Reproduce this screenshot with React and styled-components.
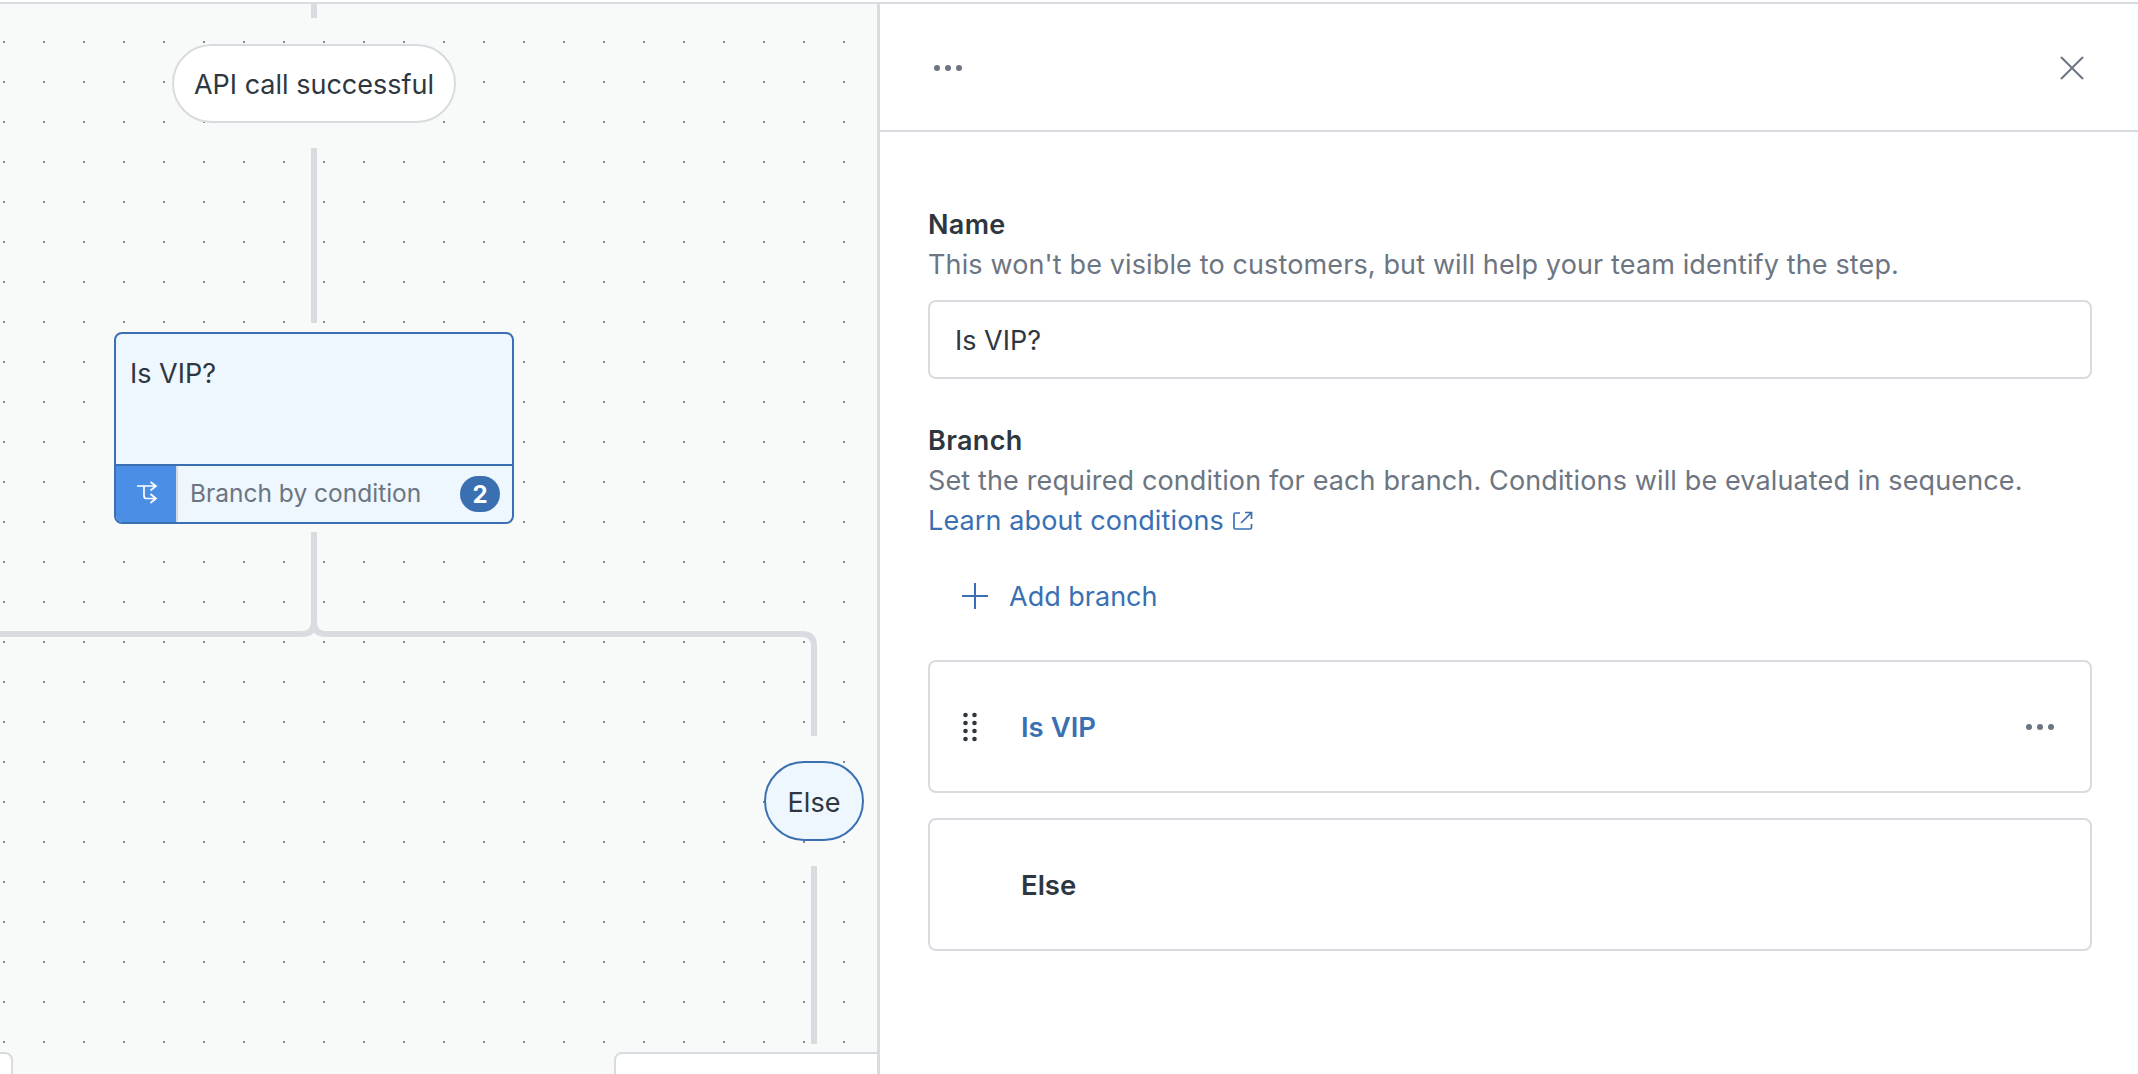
import React from 'react';
import styled, { createGlobalStyle } from 'styled-components';

const LINE = '#d8dbdf';
const BLUE = '#3a70b2';
const INK = '#2e3740';
const GREY = '#6c7581';

const Global = createGlobalStyle`
    html, body {
        margin: 0;
        padding: 0;
        background: #fff;
    }
    body {
        font-family: Inter, "Liberation Sans", sans-serif;
        font-size: 27px;
        color: ${INK};
    }
`

const Shell = styled.div`
    width: 2138px;
    height: 1074px;
    padding-top: 2px;
    box-sizing: border-box;
    overflow: hidden;
`

const Frame = styled.div`
    height: 1072px;
    display: flex;
    border-top: 2px solid ${LINE};
    box-sizing: border-box;
`

const Canvas = styled.div`
    position: relative;
    flex: none;
    width: 880px;
    box-sizing: border-box;
    border-right: 3px solid ${LINE};
    background-color: #f8fafa;
    background-image: radial-gradient(circle, #83888f 1px, transparent 1.4px);
    background-size: 40px 40px;
    background-position: -16px 18px;
    overflow: hidden;
`

const Wires = styled.svg`
    position: absolute;
    left: 0;
    top: 0;
`

const Pill = styled.div`
    position: absolute;
    left: ${p => p.$left}px;
    top: ${p => p.$top}px;
    width: ${p => p.$width}px;
    height: ${p => p.$height}px;
    box-sizing: border-box;
    display: flex;
    align-items: center;
    justify-content: center;
    padding-top: 2px;
    border: 2px solid ${p => p.$active ? BLUE : LINE};
    border-radius: 40px;
    background: ${p => p.$active ? '#eef6fe' : '#fff'};
    font-size: 27px;
`

const Step = styled.div`
    position: absolute;
    left: 114px;
    top: 328px;
    width: 400px;
    height: 192px;
    box-sizing: border-box;
    display: flex;
    flex-direction: column;
    border: 2px solid ${BLUE};
    border-radius: 8px;
    background: #eef6fe;
    overflow: hidden;
`

const StepTitle = styled.div`
    flex: 1;
    padding: 24px 14px 0;
    font-size: 27px;
    line-height: 32px;
`

const StepFooter = styled.div`
    height: 56px;
    flex: none;
    display: flex;
    align-items: center;
    border-top: 2px solid ${BLUE};
`

const StepIcon = styled.div`
    width: 62px;
    align-self: stretch;
    flex: none;
    box-sizing: border-box;
    padding-left: 2px;
    display: flex;
    align-items: center;
    justify-content: center;
    background: #4a8ee6;
    border-right: 2px solid ${LINE};
`

const StepKind = styled.div`
    flex: 1;
    padding: 0 0 2px 12px;
    font-size: 24.5px;
    color: ${GREY};
`

const Count = styled.div`
    width: 40px;
    height: 36px;
    margin-right: 12px;
    display: flex;
    align-items: center;
    justify-content: center;
    border-radius: 18px;
    background: ${BLUE};
    color: #fff;
    font-size: 24px;
    font-weight: 700;
`

const BottomCard = styled.div`
    position: absolute;
    top: 1048px;
    left: ${p => p.$left}px;
    width: ${p => p.$width}px;
    height: 40px;
    box-sizing: border-box;
    border: 2px solid ${LINE};
    border-radius: 8px;
    background: #fff;
`

const Panel = styled.div`
    flex: 1;
    min-width: 0;
`

const PanelHeader = styled.div`
    height: 128px;
    box-sizing: border-box;
    display: flex;
    align-items: center;
    justify-content: space-between;
    padding: 1px 54px 0 54px;
    border-bottom: 2px solid ${LINE};
`

const Dots = styled.svg`
    display: block;
    flex: none;
`

const PanelBody = styled.div`
    padding: 73px 46px 0 48px;
`

const Label = styled.div`
    font-size: 27px;
    font-weight: 600;
    letter-spacing: 0.35px;
    line-height: 40px;
`

const Help = styled.div`
    font-size: 27px;
    letter-spacing: 0.13px;
    line-height: 40px;
    color: ${GREY};
`

const TextBox = styled.div`
    height: 79px;
    margin: 15px 0 42px;
    box-sizing: border-box;
    display: flex;
    align-items: center;
    padding: 2px 0 0 25px;
    border: 2px solid ${LINE};
    border-radius: 8px;
    font-size: 27px;
`

const LearnLink = styled.a`
    display: flex;
    align-items: center;
    gap: 9px;
    font-size: 27px;
    letter-spacing: 0.12px;
    line-height: 40px;
    color: ${BLUE};
`

const AddButton = styled.div`
    height: 40px;
    margin: 35px 0 44px 34px;
    display: flex;
    align-items: center;
    gap: 21px;
    font-size: 27px;
    color: ${BLUE};
`

const Branches = styled.div`
    display: flex;
    flex-direction: column;
    gap: 25px;
`

const BranchRow = styled.div`
    height: 133px;
    box-sizing: border-box;
    display: flex;
    align-items: center;
    padding: 0 36px 0 91px;
    position: relative;
    border: 2px solid ${LINE};
    border-radius: 8px;
`

const Grip = styled.svg`
    position: absolute;
    left: 33px;
    top: 50px;
`

const BranchName = styled.div`
    flex: 1;
    font-size: 27.5px;
    font-weight: 600;
    color: ${p => p.$active ? BLUE : INK};
`

function MoreDots() {
    return (
        <Dots width="28" height="8" viewBox="0 0 28 8" fill={GREY}>
            <circle cx="3" cy="4" r="3" />
            <circle cx="14" cy="4" r="3" />
            <circle cx="25" cy="4" r="3" />
        </Dots>
    );
}

function BranchIcon() {
    return (
        <svg width="22" height="26" viewBox="0 0 22 26" fill="none" stroke="#fff" strokeWidth="1.7">
            <path d="M1 5h19M14.500 1l5.500 4-5.500 4.500M8 5v10q0 2.500 2.500 2.500H20M14.500 13l5.500 4.500-5.500 4.500" />
        </svg>
    );
}

export default function App() {
    return (
        <Shell>
            <Global />
            <Frame>
                <Canvas>
                    <Wires width="877" height="1070" fill="none" stroke={LINE} strokeWidth="6">
                        <path d="M314 0V14M314 144V319" />
                        <path d="M314 528V618q0 12 -12 12H0" />
                        <path d="M314 618q0 12 12 12H802q12 0 12 12V732M814 862V1040" />
                    </Wires>
                    <Pill $left={172} $top={40} $width={284} $height={79}>API call successful</Pill>
                    <Step>
                        <StepTitle>Is VIP?</StepTitle>
                        <StepFooter>
                            <StepIcon><BranchIcon /></StepIcon>
                            <StepKind>Branch by condition</StepKind>
                            <Count>2</Count>
                        </StepFooter>
                    </Step>
                    <Pill $active $left={764} $top={757} $width={100} $height={80}>Else</Pill>
                    <BottomCard $left={-30} $width={43} />
                    <BottomCard $left={614} $width={280} />
                </Canvas>
                <Panel>
                    <PanelHeader>
                        <MoreDots />
                        <svg width="24" height="24" viewBox="0 0 24 24" stroke={GREY} strokeWidth="2">
                            <path d="M1 1l22 22M23 1L1 23" />
                        </svg>
                    </PanelHeader>
                    <PanelBody>
                        <Label>Name</Label>
                        <Help>This won't be visible to customers, but will help your team identify the step.</Help>
                        <TextBox>Is VIP?</TextBox>
                        <Label>Branch</Label>
                        <Help>Set the required condition for each branch. Conditions will be evaluated in sequence.</Help>
                        <LearnLink>
                            Learn about conditions
                            <svg width="20" height="20" viewBox="0 0 20 20" fill="none" stroke={BLUE} strokeWidth="1.7">
                                <path d="M7 2H2.500Q1 2 1 3.500v13Q1 18 2.500 18h14.500q1.500 0 1.500-1.500V13M8 12L18 2M12 1.500h6.500V8" />
                            </svg>
                        </LearnLink>
                        <AddButton>
                            <svg width="26" height="26" viewBox="0 0 26 26" stroke={BLUE} strokeWidth="2">
                                <path d="M13 0v26M0 13h26" />
                            </svg>
                            Add branch
                        </AddButton>
                        <Branches>
                            <BranchRow>
                                <Grip width="14" height="30" viewBox="0 0 14 30" fill={INK}>
                                    {[3, 11, 19, 27].map(y => (
                                        <React.Fragment key={y}>
                                            <circle cx="2.500" cy={y} r="2.300" />
                                            <circle cx="11.500" cy={y} r="2.300" />
                                        </React.Fragment>
                                    ))}
                                </Grip>
                                <BranchName $active>Is VIP</BranchName>
                                <MoreDots />
                            </BranchRow>
                            <BranchRow>
                                <BranchName>Else</BranchName>
                            </BranchRow>
                        </Branches>
                    </PanelBody>
                </Panel>
            </Frame>
        </Shell>
    );
}
